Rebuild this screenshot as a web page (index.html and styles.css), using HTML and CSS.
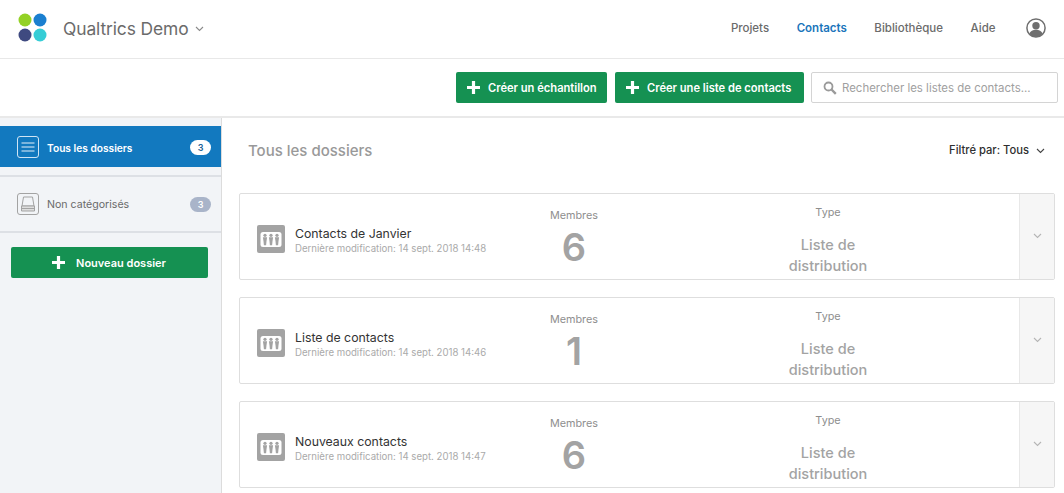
FILE: index.html
```html
<!DOCTYPE html>
<html lang="fr">
<head>
<meta charset="utf-8">
<title>Contacts</title>
<link rel="stylesheet" href="styles.css">
</head>
<body>
<svg class="defs" width="0" height="0"><defs>
  <symbol id="people" viewBox="0 0 28 28"><rect width="28" height="28" rx="2" fill="#a3a3a3"/><rect x="3.500" y="7" width="21" height="15" rx="2.500" fill="#fff"/><g fill="#a3a3a3"><circle cx="8" cy="10.300" r="1.600"/><circle cx="14" cy="10.300" r="1.600"/><circle cx="20" cy="10.300" r="1.600"/><path d="M5.900 12.300h4.200l-.6 4-.4 4H6.900l-.4-4zM11.900 12.300h4.200l-.6 4-.4 4h-2.200l-.4-4zM17.900 12.300h4.200l-.6 4-.4 4h-2.200l-.4-4z"/></g></symbol>
  <symbol id="plus" viewBox="0 0 15 15"><path d="M7.500 1v13M1 7.500h13" stroke="#fff" stroke-width="3.200"/></symbol>
  <symbol id="chev" viewBox="0 0 9 6"><path d="M1 1l3.500 3.500L8 1" fill="none" stroke="currentColor" stroke-width="1.100"/></symbol>
</defs></svg>
<header class="topbar">
  <div class="brand">
    <svg class="logo" width="30" height="30" viewBox="0 0 30 30"><circle cx="7" cy="7" r="6.500" fill="#93d125"/><circle cx="22" cy="7" r="6.500" fill="#1a7fd0"/><circle cx="7" cy="22" r="6.500" fill="#3f4a80"/><circle cx="22" cy="22" r="6.500" fill="#35cdd6"/></svg>
    <span class="brand-name">Qualtrics Demo</span>
    <svg class="chev brand-chev" width="9" height="6"><use href="#chev"/></svg>
  </div>
  <nav class="nav">
    <a class="nav-link">Projets</a>
    <a class="nav-link active">Contacts</a>
    <a class="nav-link">Bibliothèque</a>
    <a class="nav-link">Aide</a>
    <svg class="avatar" width="20" height="20" viewBox="0 0 20 20"><circle cx="10" cy="10" r="9.100" fill="#fff" stroke="#6f6f6f" stroke-width="1.500"/><circle cx="10" cy="7.800" r="3.700" fill="#6f6f6f"/><path d="M3.300 16c1-3 3.600-4.200 6.700-4.200s5.700 1.200 6.700 4.200a9 9 0 0 1-13.400 0z" fill="#6f6f6f"/></svg>
  </nav>
</header>
<section class="toolbar">
  <button class="btn btn-sample"><svg class="plus" width="15" height="15"><use href="#plus"/></svg><span>Créer un échantillon</span></button>
  <button class="btn btn-list"><svg class="plus" width="15" height="15"><use href="#plus"/></svg><span>Créer une liste de contacts</span></button>
  <div class="search">
    <svg width="14" height="14" viewBox="0 0 14 14"><circle cx="5.500" cy="5.500" r="4" fill="none" stroke="#9a9a9a" stroke-width="1.800"/><path d="M8.500 8.500l4.300 4.300" stroke="#9a9a9a" stroke-width="2.400"/></svg>
    <span>Rechercher les listes de contacts...</span>
  </div>
</section>
<div class="main">
  <aside class="sidebar">
    <div class="folder selected">
      <svg class="ficon" width="22" height="22" viewBox="0 0 22 22"><rect x=".5" y=".5" width="21" height="21" rx="2.500" fill="none" stroke="#cfe4f4"/><path d="M4.500 7h13M4.500 11h13M4.500 15h13" stroke="#e6f1f9" stroke-width="1"/></svg>
      <span class="fname">Tous les dossiers</span>
      <span class="count">3</span>
    </div>
    <div class="folder plain">
      <svg class="ficon" width="22" height="22" viewBox="0 0 22 22"><rect x=".5" y=".5" width="21" height="21" rx="2.500" fill="#f2f4f7" stroke="#a3a3a3"/><path d="M6.500 4h9l1.500 9H5z" fill="none" stroke="#a3a3a3"/><path d="M4.500 13h13v5h-13z" fill="#dedede" stroke="#a3a3a3"/><path d="M4.500 15.500h13" stroke="#a3a3a3"/></svg>
      <span class="fname">Non catégorisés</span>
      <span class="count">3</span>
    </div>
    <button class="btn btn-new"><svg class="plus" width="15" height="15"><use href="#plus"/></svg><span>Nouveau dossier</span></button>
  </aside>
  <main class="content">
    <div class="content-head">
      <h1>Tous les dossiers</h1>
      <div class="filter">Filtré par: Tous <svg class="chev" width="9" height="6"><use href="#chev"/></svg></div>
    </div>
    <article class="card">
      <svg class="cicon" width="28" height="28"><use href="#people"/></svg>
      <div class="info"><div class="title">Contacts de Janvier</div><div class="meta">Dernière modification: 14 sept. 2018 14:48</div></div>
      <div class="members"><div class="label">Membres</div><div class="num">6</div></div>
      <div class="type"><div class="label">Type</div><div class="tval">Liste de distribution</div></div>
      <div class="expand"><svg class="chev" width="9" height="6"><use href="#chev"/></svg></div>
    </article>
    <article class="card">
      <svg class="cicon" width="28" height="28"><use href="#people"/></svg>
      <div class="info"><div class="title">Liste de contacts</div><div class="meta">Dernière modification: 14 sept. 2018 14:46</div></div>
      <div class="members"><div class="label">Membres</div><div class="num">1</div></div>
      <div class="type"><div class="label">Type</div><div class="tval">Liste de distribution</div></div>
      <div class="expand"><svg class="chev" width="9" height="6"><use href="#chev"/></svg></div>
    </article>
    <article class="card">
      <svg class="cicon" width="28" height="28"><use href="#people"/></svg>
      <div class="info"><div class="title">Nouveaux contacts</div><div class="meta">Dernière modification: 14 sept. 2018 14:47</div></div>
      <div class="members"><div class="label">Membres</div><div class="num">6</div></div>
      <div class="type"><div class="label">Type</div><div class="tval">Liste de distribution</div></div>
      <div class="expand"><svg class="chev" width="9" height="6"><use href="#chev"/></svg></div>
    </article>
  </main>
</div>
</body>
</html>
```
FILE: styles.css
```css
* { box-sizing: border-box; }
html, body { margin: 0; height: 493px; overflow: hidden; }
body { background: #fff; font-family: Inter, "Liberation Sans", sans-serif; color: #333; }
svg { display: block; flex: none; }
.defs { position: absolute; }
.chev { color: #444; }

.topbar { height: 59px; border-bottom: 1px solid #e8e8e8; display: flex; align-items: center; justify-content: space-between; padding: 0 18px 2px 18px; }
.brand { display: flex; align-items: center; }
.logo { margin-right: 15px; }
.brand-name { font-size: 17.400px; color: #6b6b6b; letter-spacing: -0.1px; width: 125px; white-space: nowrap; }
.brand-chev { margin-left: 7px; margin-top: 2px; color: #8a8a8a; }
.nav { display: flex; align-items: center; }
.nav-link { font-size: 11.500px; font-weight: 500; color: #6b6b6b; white-space: nowrap; margin-right: 27.500px; }
.nav-link.active { color: #1a75bb; font-weight: 600; }
.avatar { margin-left: 3px; }

.toolbar { height: 59px; border-bottom: 2px solid #e9e9e9; display: flex; justify-content: flex-end; align-items: center; gap: 8px; padding: 0 6px 0 0; }
.btn { border: 0; border-radius: 2px; background: #159152; color: #fff; font: 600 11.150px Inter, "Liberation Sans", sans-serif; height: 31px; display: flex; align-items: center; white-space: nowrap; }
.btn-sample { width: 151px; padding-left: 10px; }
.btn-list { width: 189px; padding-left: 10px; }
.btn .plus { margin-right: 7px; }
.search { width: 247px; height: 31px; margin-left: -1px; border: 1px solid #d4d4d4; border-radius: 2px; display: flex; align-items: center; gap: 5px; padding-left: 11px; font-size: 11.450px; color: #a0a0a0; white-space: nowrap; }

.main { display: flex; height: 375px; }
.sidebar { width: 222px; flex: none; background: #f2f4f7; border-right: 1px solid #dcdcdc; padding-top: 8px; }
.folder { display: flex; align-items: center; height: 41px; padding: 0 11px 0 17px; }
.folder.selected { background: #1279bf; color: #fff; font-weight: 600; font-size: 10.200px; margin-bottom: 8px; padding-top: 2px; }
.folder.selected .ficon { margin-top: -1px; }
.folder.plain { border-top: 2px solid #dde0e5; border-bottom: 2px solid #dde0e5; height: 58px; color: #6a6a6a; font-weight: 400; font-size: 10.600px; }
.ficon { margin-right: 8px; }
.fname { flex: 1; white-space: nowrap; }
.count { width: 21px; height: 15px; border-radius: 8px; text-align: center; font-size: 9px; line-height: 15px; font-weight: 600; }
.selected .count { background: #fff; color: #1a5f96; margin-right: -1px; }
.plain .count { background: #a9b4c9; color: #fff; margin-right: -1px; }
.btn-new { width: 197px; margin: 14px 0 0 11px; padding-right: 8px; justify-content: center; font-size: 11px; }
.btn-new .plus { margin-right: 10px; }

.content { flex: 1; padding: 0 9px 0 17px; }
.content-head { height: 75px; display: flex; justify-content: space-between; align-items: flex-start; padding: 23px 10px 0 9px; }
h1 { margin: 0; font-size: 15px; font-weight: 500; color: #999; line-height: 19px; }
.filter { display: flex; align-items: center; gap: 7px; font-size: 11.200px; font-weight: 500; color: #2f2f2f; line-height: 19px; white-space: nowrap; }

.card { height: 86.500px; margin-bottom: 17.500px; border: 1px solid #dedede; border-radius: 2px; display: flex; align-items: stretch; background: #fff; }
.cicon { margin: 31px 10px 0 17px; }
.info { width: 234px; padding-top: 32px; flex: none; white-space: nowrap; }
.title { font-size: 12.300px; color: #333; line-height: 16px; font-weight: 400; }
.meta { font-size: 9.650px; color: #aaa; line-height: 14px; }
.members { width: 88px; flex: none; margin-left: 1px; text-align: center; padding-top: 15px; }
.label { font-size: 10.800px; color: #8e8e8e; line-height: 14px; }
.num { font-size: 38px; line-height: 44px; font-weight: 600; color: #a3a3a3; margin-top: 2px; }
.type { width: 120px; flex: none; margin-left: 150px; text-align: center; padding-top: 12px; }
.tval { font-size: 14.500px; font-weight: 500; line-height: 21px; color: #a3a3a3; margin: 14px auto 0; width: 100px; }
.expand { margin-left: auto; width: 35px; flex: none; background: #f6f6f6; border-left: 1px solid #e8e8e8; display: flex; align-items: center; justify-content: center; }
.expand .chev { color: #b5b5b5; }
```
